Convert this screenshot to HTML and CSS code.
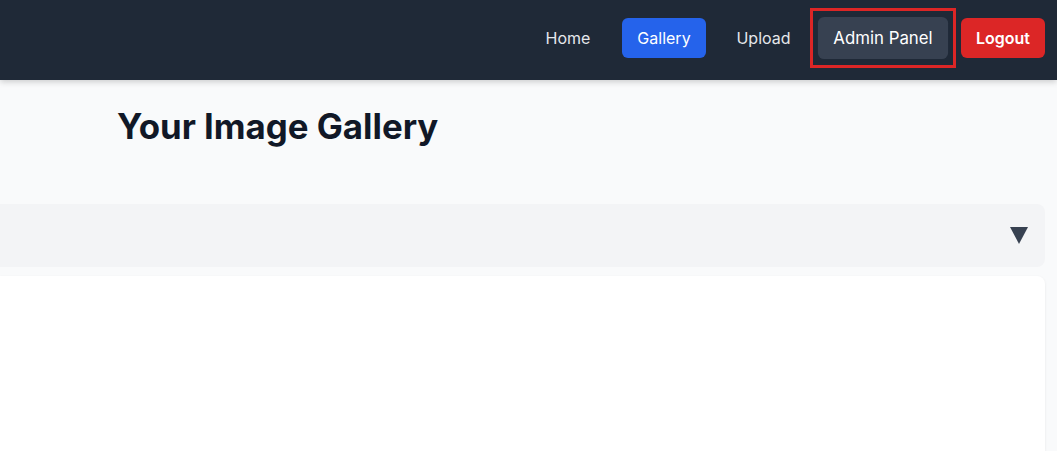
FILE: index.html
```html
<!DOCTYPE html>
<html lang="en">
<head>
<meta charset="utf-8">
<title>Your Image Gallery</title>
<link rel="stylesheet" href="styles.css">
</head>
<body>
<nav class="navbar">
  <div class="nav-links">
    <a class="nav-link nav-home" href="#">Home</a>
    <a class="nav-link nav-gallery nav-link-active" href="#">Gallery</a>
    <a class="nav-link nav-upload" href="#">Upload</a>
    <span class="highlight-wrap">
      <a class="nav-link nav-link-admin" href="#">Admin Panel</a>
    </span>
    <a class="nav-link nav-link-logout" href="#">Logout</a>
  </div>
</nav>
<main class="main">
  <h1 class="page-title">Your Image Gallery</h1>
  <div class="filter-panel">
    <svg class="filter-toggle" width="18" height="17" viewBox="0 0 18 17" aria-hidden="true">
      <polygon points="0,0 18,0 9,17" fill="#374151"/>
    </svg>
  </div>
  <section class="gallery-card"></section>
</main>
</body>
</html>
```
FILE: styles.css
```css
* { box-sizing: border-box; }
html, body { margin: 0; padding: 0; }
body {
  font-family: Inter, "Noto Sans", "Liberation Sans", sans-serif;
  background: #f9fafb;
  height: 451px;
  overflow: hidden;
}
.navbar {
  height: 80px;
  background: #1f2937;
  box-shadow: 0 2px 6px rgba(0,0,0,0.18);
  position: relative;
  z-index: 2;
  display: flex;
  align-items: center;
  justify-content: flex-end;
  padding: 0 12px 4px 0;
}
.nav-links {
  display: flex;
  align-items: center;
  gap: 16px;
}
.nav-link {
  display: block;
  height: 40px;
  line-height: 40px;
  padding: 0;
  text-align: center;
  border-radius: 6px;
  color: #e5e7eb;
  text-decoration: none;
  font-size: 16px;
  font-weight: 400;
  white-space: nowrap;
}
.nav-home { width: 76px; }
.nav-gallery { width: 84px; }
.nav-upload { width: 83px; }
.nav-link-active { background: #2563eb; color: #ffffff; }
.nav-link-admin {
  width: 124px;
  background: #374151;
  color: #ffffff;
  transform: scale(1.05);
}
.nav-link-logout {
  width: 84px;
  background: #dc2626;
  color: #ffffff;
  font-weight: 600;
}
.highlight-wrap { position: relative; display: block; }
.highlight-wrap::after {
  content: "";
  position: absolute;
  left: -11px; right: -11px; top: -10px; bottom: -10px;
  border: 3px solid #dc2626;
  pointer-events: none;
}
.main {
  padding: 0 12px 0 0;
}
.page-title {
  margin: 0;
  padding: 26px 0 0 117px;
  height: 124px;
  font-size: 34.8px;
  line-height: 40px;
  font-weight: 700;
  color: #111827;
}
.filter-panel {
  height: 63px;
  background: #f3f4f6;
  border-radius: 0 8px 8px 0;
  display: flex;
  align-items: center;
  justify-content: flex-end;
  padding-right: 17px;
}
.filter-toggle { display: block; }
.gallery-card {
  margin-top: 9px;
  height: 175px;
  background: #ffffff;
  border-radius: 0 8px 0 0;
  box-shadow: 0 1px 3px rgba(0,0,0,0.08);
}
```
